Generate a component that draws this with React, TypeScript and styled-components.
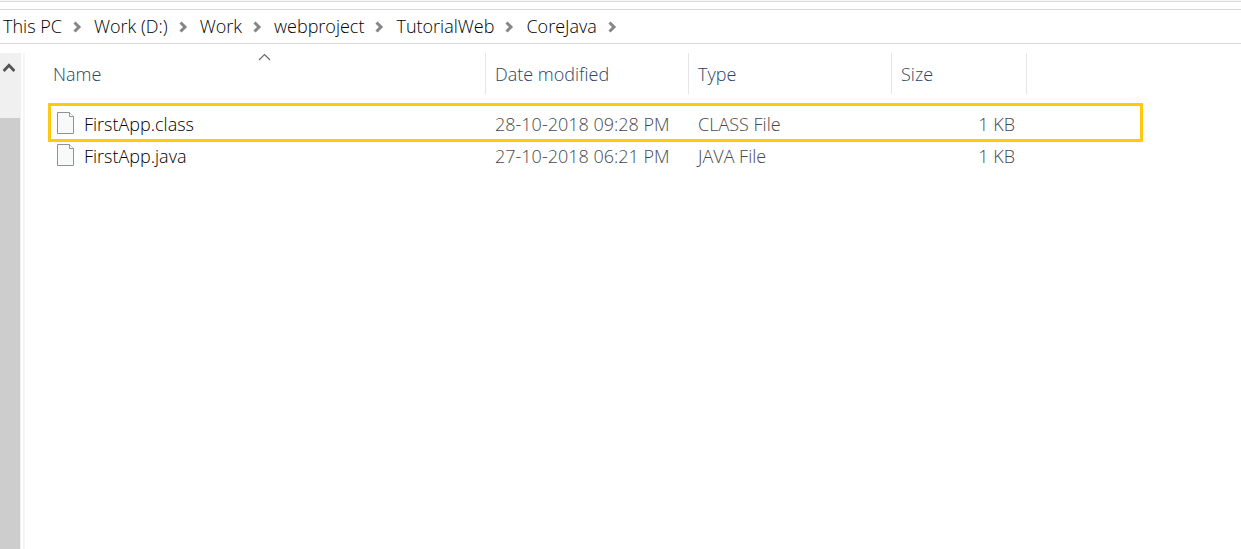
import React from "react";
import styled, { createGlobalStyle } from "styled-components";

const GlobalStyle = createGlobalStyle`
  * { box-sizing: border-box; }
  body {
    margin: 0;
    background: #fff;
    color: #000;
    font-family: "Open Sans", "Noto Sans", sans-serif;
    font-size: 18px;
    font-weight: 300;
    line-height: 24px;
  }
  button { font: inherit; color: inherit; background: none; border: 0; padding: 0; margin: 0; }
`;

const Window = styled.div`
  display: flex;
  flex-direction: column;
  min-height: 100vh;
`;

const RibbonEdge = styled.div`
  height: 2px;
  background: #f5f5f5;
  border-bottom: 1px solid #dadbdc;
`;

const AddressBar = styled.nav`
  margin-top: 7px;
  height: 35px;
  border-top: 1px solid #d9d9d9;
  border-bottom: 1px solid #d9d9d9;
`;

const Crumbs = styled.ol`
  display: flex;
  align-items: center;
  height: 100%;
  margin: 0;
  padding: 0 0 1px 3px;
  list-style: none;
`;

const Crumb = styled.li`
  display: flex;
  align-items: center;
  white-space: nowrap;
  color: #000;
`;

const CrumbArrow = styled.svg`
  width: 9px;
  height: 12px;
  margin: 2px 12px 0 11px;
`;

const Body = styled.div`
  display: flex;
  flex: 1;
  margin-top: 9px;
`;

const ScrollTrack = styled.div`
  display: flex;
  flex-direction: column;
  width: 21px;
  padding-right: 1px;
  background: #f0f0f0;
`;

const ScrollUp = styled.button`
  display: flex;
  justify-content: center;
  height: 65px;
  padding: 10px 3px 0 0;
`;

const ScrollThumb = styled.div`
  flex: 1;
  background: #cdcdcd;
`;

const Splitter = styled.div`
  width: 2px;
  margin-left: 2px;
  background: #f5f5f5;
`;

const Files = styled.main`
  flex: 1;
  padding-left: 19px;
`;

const Table = styled.table`
  width: 100%;
  table-layout: fixed;
  border-collapse: separate;
  border-spacing: 0;
`;

const Col = styled.col<{ $width?: number }>`
  width: ${(p) => (p.$width ? `${p.$width}px` : "auto")};
`;

const Heading = styled.th`
  position: relative;
  height: 41px;
  padding: 0 9px;
  border-right: 1px solid #e5e5e5;
  color: #2a4468;
  font-weight: inherit;
  text-align: left;
  vertical-align: middle;
`;

const SortArrow = styled.svg`
  position: absolute;
  top: 0;
  left: 50%;
  width: 13px;
  height: 8px;
  margin-left: -7px;
`;

const Row = styled.tr`
  position: relative;
`;

const Cell = styled.td<{ $align?: string }>`
  height: 32px;
  padding: 0 12px 0 9px;
  color: #484848;
  text-align: ${(p) => p.$align || "left"};
  white-space: nowrap;
`;

const FileRows = styled.tbody`
  &::before {
    content: "";
    display: block;
    height: 14px;
  }
`;

const FileName = styled.div`
  display: flex;
  align-items: center;
  gap: 10px;
  padding-left: 4px;
  color: #000;
`;

const PageIcon = styled.svg`
  width: 17px;
  height: 22px;
  margin-bottom: 2px;
`;

const Highlight = styled.div`
  position: absolute;
  top: -5px;
  left: 4px;
  width: 1095px;
  max-width: calc(100% - 8px);
  height: 39px;
  border: 3px solid #ffc90e;
  pointer-events: none;
`;

const path = ["This PC", "Work (D:)", "Work", "webproject", "TutorialWeb", "CoreJava"];

const files = [
  { name: "FirstApp.class", date: "28-10-2018 09:28 PM", type: "CLASS File", size: "1 KB", marked: true },
  { name: "FirstApp.java", date: "27-10-2018 06:21 PM", type: "JAVA File", size: "1 KB", marked: false },
];

export default function App() {
  return (
    <Window>
      <GlobalStyle />
      <RibbonEdge />
      <AddressBar aria-label="Folder path">
        <Crumbs>
          {path.map((name) => (
            <Crumb key={name}>
              <button type="button">{name}</button>
              <CrumbArrow viewBox="0 0 9 12" aria-hidden="true">
                <path d="M1.5 1.5 6 6 1.5 10.5" fill="none" stroke="#868686" strokeWidth="3" />
              </CrumbArrow>
            </Crumb>
          ))}
        </Crumbs>
      </AddressBar>
      <Body>
        <ScrollTrack>
          <ScrollUp type="button" aria-label="Scroll up">
            <svg width="12" height="10" viewBox="0 0 12 10" aria-hidden="true">
              <path d="M0.6 8 6 2.2 11.4 8" fill="none" stroke="#555" strokeWidth="2.8" />
            </svg>
          </ScrollUp>
          <ScrollThumb />
        </ScrollTrack>
        <Splitter />
        <Files>
          <Table>
            <colgroup>
              <Col $width={442} />
              <Col $width={203} />
              <Col $width={203} />
              <Col $width={135} />
              <Col />
            </colgroup>
            <thead>
              <tr>
                <Heading scope="col" aria-sort="ascending">
                  <SortArrow viewBox="0 0 13 8" aria-hidden="true">
                    <path d="M1 7 6.5 1.5 12 7" fill="none" stroke="#6a6a6a" strokeWidth="1.2" />
                  </SortArrow>
                  <button type="button">Name</button>
                </Heading>
                <Heading scope="col"><button type="button">Date modified</button></Heading>
                <Heading scope="col"><button type="button">Type</button></Heading>
                <Heading scope="col"><button type="button">Size</button></Heading>
              </tr>
            </thead>
            <FileRows>
              {files.map((f) => (
                <Row key={f.name}>
                  <Cell>
                    <FileName>
                      <PageIcon viewBox="0 0 17 22" aria-hidden="true">
                        <path d="M.5.5h12l4 4v17H.5z" fill="#f8f9f9" stroke="#929292" />
                        <path d="M12.5.5v4h4" fill="#fff" stroke="#929292" />
                      </PageIcon>
                      {f.name}
                    </FileName>
                    {f.marked && <Highlight />}
                  </Cell>
                  <Cell>{f.date}</Cell>
                  <Cell>{f.type}</Cell>
                  <Cell $align="right">{f.size}</Cell>
                </Row>
              ))}
            </FileRows>
          </Table>
        </Files>
      </Body>
    </Window>
  );
}
